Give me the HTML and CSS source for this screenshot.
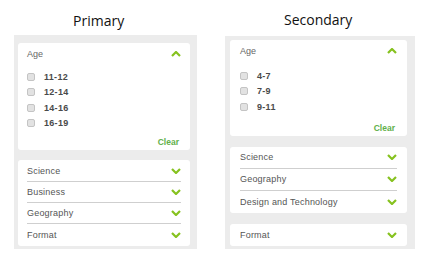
FILE: index.html
```html
<!DOCTYPE html>
<html lang="en">
<head>
    <meta charset="UTF-8">
    <title>Filters</title>
    <link rel="stylesheet" href="styles.css">
</head>
<body>
    <div class="columns">
        <div class="column primary">
            <h2>Primary</h2>
            <div class="panel">
                <div class="card">
                    <div class="head">Age <svg class="chev up" viewBox="0 0 10 6"><polyline points="1,1 5,5 9,1"/></svg></div>
                    <ul class="options">
                        <li><span class="box"></span>11-12</li>
                        <li><span class="box"></span>12-14</li>
                        <li><span class="box"></span>14-16</li>
                        <li><span class="box"></span>16-19</li>
                    </ul>
                    <div class="clear">Clear</div>
                </div>
                <div class="card list">
                    <div class="row">Science <svg class="chev" viewBox="0 0 10 6"><polyline points="1,1 5,5 9,1"/></svg></div>
                    <div class="row">Business <svg class="chev" viewBox="0 0 10 6"><polyline points="1,1 5,5 9,1"/></svg></div>
                    <div class="row">Geography <svg class="chev" viewBox="0 0 10 6"><polyline points="1,1 5,5 9,1"/></svg></div>
                    <div class="row">Format <svg class="chev" viewBox="0 0 10 6"><polyline points="1,1 5,5 9,1"/></svg></div>
                </div>
            </div>
        </div>

        <div class="column secondary">
            <h2>Secondary</h2>
            <div class="panel">
                <div class="card">
                    <div class="head">Age <svg class="chev up" viewBox="0 0 10 6"><polyline points="1,1 5,5 9,1"/></svg></div>
                    <ul class="options">
                        <li><span class="box"></span>4-7</li>
                        <li><span class="box"></span>7-9</li>
                        <li><span class="box"></span>9-11</li>
                    </ul>
                    <div class="clear">Clear</div>
                </div>
                <div class="card list">
                    <div class="row">Science <svg class="chev" viewBox="0 0 10 6"><polyline points="1,1 5,5 9,1"/></svg></div>
                    <div class="row">Geography <svg class="chev" viewBox="0 0 10 6"><polyline points="1,1 5,5 9,1"/></svg></div>
                    <div class="row">Design and Technology <svg class="chev" viewBox="0 0 10 6"><polyline points="1,1 5,5 9,1"/></svg></div>
                </div>
                <div class="card list">
                    <div class="row">Format <svg class="chev" viewBox="0 0 10 6"><polyline points="1,1 5,5 9,1"/></svg></div>
                </div>
            </div>
        </div>
    </div>
</body>
</html>
```

FILE: styles.css
```css
body {
    margin: 0;
    background: #fff;
    font-family: "Liberation Sans", Arial, sans-serif;
    color: #555;
}
.columns {
    display: flex;
    padding-left: 14px;
    gap: 28px;
}
.column h2 {
    margin: 0;
    font-family: "Open Sans", sans-serif;
    font-weight: normal;
    font-size: 14px;
    color: #111;
    line-height: 20px;
}
.primary {
    width: 183px;
}
.primary h2 {
    padding: 11px 0 0 59px;
    height: 24px;
}
.secondary {
    width: 190px;
}
.secondary h2 {
    padding: 10px 0 0 59px;
    height: 26px;
}
.panel {
    background: #ececec;
    padding: 8px 7px 3px 4px;
}
.secondary .panel {
    padding: 4px 8px 3px 5px;
}
.card {
    background: #fff;
    border-radius: 3px;
    padding: 0 9px;
}
.secondary .card {
    padding: 0 10px;
}
.card + .card {
    margin-top: 10px;
}
.secondary .card + .card {
    margin-top: 11px;
}
.primary .list {
    padding-top: 1px;
}
.head {
    display: flex;
    align-items: center;
    justify-content: space-between;
    height: 22px;
    font-size: 9px;
    color: #666;
}
.options {
    list-style: none;
    margin: 4px 0 0;
    padding: 0;
}
.secondary .options {
    margin-top: 6px;
}
.options li {
    display: flex;
    align-items: center;
    height: 15.5px;
    font-size: 9px;
    font-weight: bold;
    color: #4a4a4a;
    letter-spacing: 0.3px;
}
.box {
    width: 6px;
    height: 6px;
    border: 1px solid #c4c4c4;
    border-radius: 2px;
    background: #e2e2e2;
    margin-right: 9px;
}
.clear {
    text-align: right;
    font-size: 8.5px;
    font-weight: bold;
    color: #62b04a;
    height: 14px;
    line-height: 14px;
    margin-top: 4px;
    padding: 0 2px 1px 0;
}
.secondary .clear {
    margin-top: 6px;
}
.row {
    display: flex;
    align-items: center;
    justify-content: space-between;
    height: 20px;
    font-size: 9px;
    color: #555;
    border-bottom: 1px solid #cfcfcf;
    letter-spacing: 0.2px;
}
.row:last-child {
    border-bottom: none;
    height: 22px;
}
.secondary .row {
    height: 21px;
}
.secondary .row:last-child {
    height: 22px;
}
.chev {
    width: 10px;
    height: 6px;
    fill: none;
    stroke: #86c21f;
    stroke-width: 2.2;
}
.chev.up {
    transform: rotate(180deg);
}
```
